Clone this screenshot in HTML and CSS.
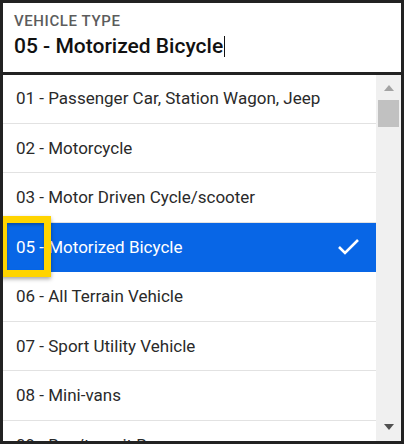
FILE: index.html
```html
<!DOCTYPE html>
<html>
<head>
<meta charset="utf-8">
<link rel="stylesheet" href="styles.css">
</head>
<body>
<div class="frame">
  <div class="field">
    <div class="label">Vehicle Type</div>
    <div class="value">05 - Motorized Bicycle<span class="caret"></span></div>
  </div>
  <div class="list">
    <div class="items">
      <div class="row">01 - Passenger Car, Station Wagon, Jeep</div>
      <div class="row">02 - Motorcycle</div>
      <div class="row">03 - Motor Driven Cycle/scooter</div>
      <div class="row selected">
        <span>05 - Motorized Bicycle</span>
        <svg class="check" width="24" height="18" viewBox="0 0 24 18"><polyline points="2,9 8,15 21,2" fill="none" stroke="#fff" stroke-width="2.6"/></svg>
        <div class="spot"></div>
      </div>
      <div class="row">06 - All Terrain Vehicle</div>
      <div class="row">07 - Sport Utility Vehicle</div>
      <div class="row">08 - Mini-vans</div>
      <div class="row">09 - Bus/transit Bus</div>
    </div>
    <div class="scrollbar">
      <div class="arrow up"></div>
      <div class="thumb"></div>
      <div class="arrow down"></div>
    </div>
  </div>
</div>
</body>
</html>
```
FILE: styles.css
```css
html, body {
  margin: 0;
  padding: 0;
  background: #222;
}
body {
  font-family: Roboto, "Liberation Sans", sans-serif;
}
.frame {
  width: 404px;
  height: 444px;
  box-sizing: border-box;
  padding: 3px;
  display: flex;
  flex-direction: column;
  gap: 3px;
  background: #222;
}
.field {
  height: 69px;
  box-sizing: border-box;
  background: #fff;
  padding: 9.5px 11px 0;
}
.label {
  font-size: 15px;
  font-weight: 500;
  letter-spacing: 0.6px;
  text-transform: uppercase;
  color: #5c5c5c;
  line-height: 17.6px;
}
.value {
  margin-top: 4.3px;
  font-size: 21px;
  font-weight: 500;
  color: #111;
  line-height: 24.6px;
  display: flex;
  align-items: center;
}
.caret {
  display: inline-block;
  width: 1px;
  height: 21px;
  background: #111;
  margin-left: 1px;
}
.list {
  flex: 1;
  display: flex;
  background: #fff;
  overflow: hidden;
  min-height: 0;
}
.items {
  flex: 1;
  margin-top: -1px;
  min-width: 0;
}
.row {
  position: relative;
  height: 49.5px;
  box-sizing: border-box;
  border-bottom: 1px solid #e2e2e2;
  padding-left: 13px;
  display: flex;
  align-items: center;
  font-size: 17px;
  color: #2a2a2a;
  white-space: nowrap;
}
.row.selected {
  background: #0866e6;
  border-bottom-color: #0866e6;
  color: #fff;
  justify-content: space-between;
  padding-right: 15px;
}
.check {
  display: block;
}
.spot {
  position: absolute;
  left: -3px;
  top: -7px;
  width: 51px;
  height: 61px;
  box-sizing: border-box;
  border: 7px solid #ffd400;
  box-shadow: 0 2px 4px rgba(0,0,0,0.35), inset 0 2px 3px rgba(0,0,0,0.25);
}
.scrollbar {
  width: 25px;
  background: #f0f0f0;
  display: flex;
  flex-direction: column;
  align-items: center;
  padding: 10px 0 11px;
  box-sizing: border-box;
}
.arrow {
  width: 0;
  height: 0;
  border-left: 5.5px solid transparent;
  border-right: 5.5px solid transparent;
}
.arrow.up {
  border-bottom: 6px solid #a3a3a3;
}
.arrow.down {
  margin-top: auto;
  border-top: 6px solid #505050;
}
.thumb {
  margin-top: 9px;
  width: 21px;
  height: 27px;
  background: #c1c1c1;
}
```
